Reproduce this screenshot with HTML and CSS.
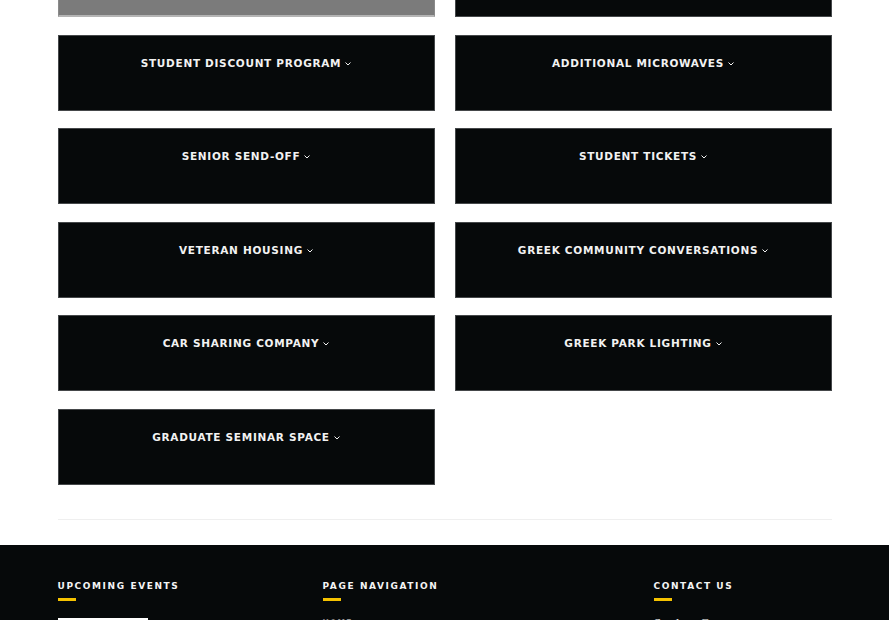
FILE: index.html
```html
<!DOCTYPE html>
<html lang="en">
<head>
<meta charset="utf-8">
<title>Projects</title>
<link rel="stylesheet" href="styles.css">
</head>
<body>
<main class="projects">
  <div class="card card-hover"></div>
  <div class="card"></div>
  <div class="card"><span class="card-title">Student Discount Program</span><svg class="chev" viewBox="0 0 6 4" width="6" height="4"><path d="M0.5 0.5 L3 3 L5.5 0.5" fill="none" stroke="#f2f2f2" stroke-width="1"/></svg></div>
  <div class="card"><span class="card-title">Additional Microwaves</span><svg class="chev" viewBox="0 0 6 4" width="6" height="4"><path d="M0.5 0.5 L3 3 L5.5 0.5" fill="none" stroke="#f2f2f2" stroke-width="1"/></svg></div>
  <div class="card"><span class="card-title">Senior Send-Off</span><svg class="chev" viewBox="0 0 6 4" width="6" height="4"><path d="M0.5 0.5 L3 3 L5.5 0.5" fill="none" stroke="#f2f2f2" stroke-width="1"/></svg></div>
  <div class="card"><span class="card-title">Student Tickets</span><svg class="chev" viewBox="0 0 6 4" width="6" height="4"><path d="M0.5 0.5 L3 3 L5.5 0.5" fill="none" stroke="#f2f2f2" stroke-width="1"/></svg></div>
  <div class="card"><span class="card-title">Veteran Housing</span><svg class="chev" viewBox="0 0 6 4" width="6" height="4"><path d="M0.5 0.5 L3 3 L5.5 0.5" fill="none" stroke="#f2f2f2" stroke-width="1"/></svg></div>
  <div class="card"><span class="card-title">Greek Community Conversations</span><svg class="chev" viewBox="0 0 6 4" width="6" height="4"><path d="M0.5 0.5 L3 3 L5.5 0.5" fill="none" stroke="#f2f2f2" stroke-width="1"/></svg></div>
  <div class="card"><span class="card-title">Car Sharing Company</span><svg class="chev" viewBox="0 0 6 4" width="6" height="4"><path d="M0.5 0.5 L3 3 L5.5 0.5" fill="none" stroke="#f2f2f2" stroke-width="1"/></svg></div>
  <div class="card"><span class="card-title">Greek Park Lighting</span><svg class="chev" viewBox="0 0 6 4" width="6" height="4"><path d="M0.5 0.5 L3 3 L5.5 0.5" fill="none" stroke="#f2f2f2" stroke-width="1"/></svg></div>
  <div class="card"><span class="card-title">Graduate Seminar Space</span><svg class="chev" viewBox="0 0 6 4" width="6" height="4"><path d="M0.5 0.5 L3 3 L5.5 0.5" fill="none" stroke="#f2f2f2" stroke-width="1"/></svg></div>
</main>
<hr class="divider">
<footer class="footer">
  <div class="footer-inner">
    <section class="fcol">
      <h3 class="fhead">Upcoming Events</h3>
      <div class="fbar"></div>
      <div class="event-thumb"></div>
    </section>
    <section class="fcol">
      <h3 class="fhead">Page Navigation</h3>
      <div class="fbar"></div>
      <a class="fnav" href="#">Home</a>
    </section>
    <section class="fcol">
      <h3 class="fhead">Contact Us</h3>
      <div class="fbar"></div>
      <p class="fcontact">Student Government</p>
    </section>
  </div>
</footer>
</body>
</html>
```

FILE: styles.css
```css
* { box-sizing: border-box; }
html, body { margin: 0; padding: 0; }
body {
  background: #ffffff;
  font-family: "DejaVu Sans", "Liberation Sans", Arial, sans-serif;
  overflow: hidden;
}
.projects {
  width: 774px;
  margin: -59px auto 0;
  display: grid;
  grid-template-columns: 377px 377px;
  column-gap: 20px;
  row-gap: 17.5px;
}
.card {
  height: 76px;
  background: #06090a;
  border: 1px solid #45484a;
  padding-top: 20px;
  display: flex;
  justify-content: center;
  align-items: flex-start;
  gap: 4px;
  color: #f2f2f2;
}
.card-hover {
  background: #7b7b7b;
  border-color: #8a8a8a;
  border-bottom: 2px solid #b4b4b4;
}
.card-title {
  font-size: 10.5px;
  line-height: 14px;
  font-weight: 700;
  text-transform: uppercase;
  letter-spacing: 0.7px;
}
.chev { margin-top: 6px; flex: none; }
.divider {
  width: 774px;
  margin: 34px auto 0;
  border: 0;
  border-top: 1px solid #efefef;
  height: 0;
}
.footer {
  margin-top: 25px;
  background: #06090a;
  height: 200px;
  padding-top: 35px;
}
.footer-inner {
  width: 774px;
  margin: 0 auto;
  display: grid;
  grid-template-columns: 265px 331px 1fr;
}
.fhead {
  margin: 0;
  font-size: 9px;
  line-height: 12px;
  font-weight: 700;
  letter-spacing: 1.6px;
  text-transform: uppercase;
  color: #f4f4f4;
}
.fbar {
  width: 18px;
  height: 3px;
  background: #f5c200;
  margin-top: 6px;
}
.event-thumb {
  margin-top: 17px;
  width: 90px;
  height: 60px;
  background: #ffffff;
}
.fnav {
  display: block;
  margin-top: 17px;
  font-size: 7.5px;
  line-height: 10px;
  font-weight: 700;
  letter-spacing: 1.2px;
  text-transform: uppercase;
  color: #f4f4f4;
  text-decoration: none;
}
.fcontact {
  margin: 15px 0 0;
  font-family: "Liberation Serif", "Times New Roman", serif;
  font-size: 14px;
  line-height: 18px;
  color: #e8e8e8;
}
```
